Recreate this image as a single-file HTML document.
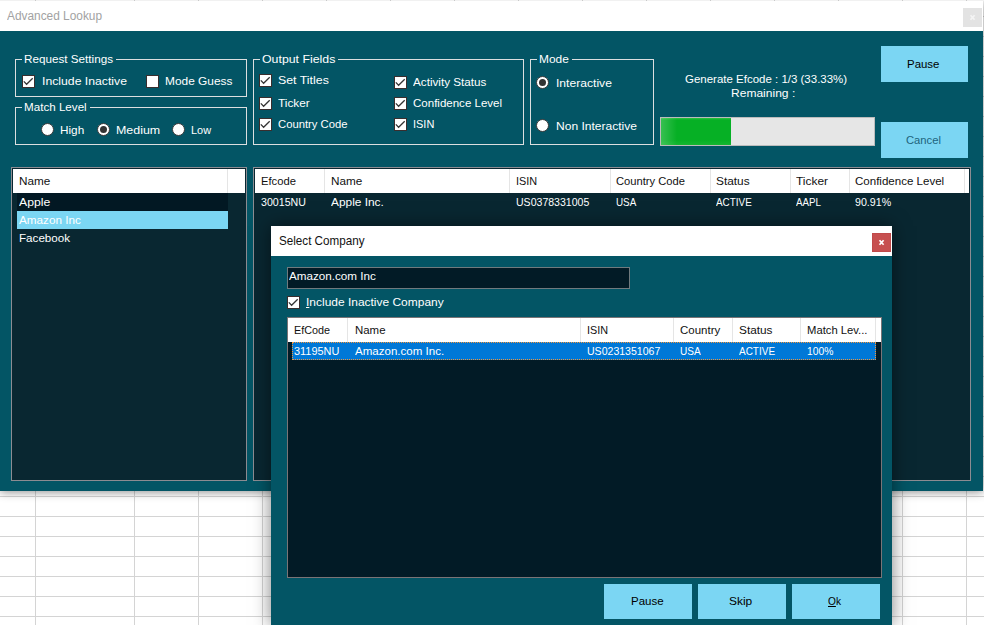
<!DOCTYPE html>
<html><head><meta charset="utf-8"><title>Advanced Lookup</title>
<style>
html,body{margin:0;padding:0;}
body{width:984px;height:625px;position:relative;overflow:hidden;background:#fff;font-family:"Liberation Sans",sans-serif;font-size:11.5px;}
div{position:absolute;box-sizing:content-box;}
.t{position:absolute;white-space:nowrap;line-height:14px;transform-origin:0 50%;}
</style></head><body>
<div style="left:0px;top:16px;width:984px;height:1px;background:#d4d4d4;"></div>
<div style="left:0px;top:36px;width:984px;height:1px;background:#d4d4d4;"></div>
<div style="left:0px;top:56px;width:984px;height:1px;background:#d4d4d4;"></div>
<div style="left:0px;top:76px;width:984px;height:1px;background:#d4d4d4;"></div>
<div style="left:0px;top:96px;width:984px;height:1px;background:#d4d4d4;"></div>
<div style="left:0px;top:116px;width:984px;height:1px;background:#d4d4d4;"></div>
<div style="left:0px;top:136px;width:984px;height:1px;background:#d4d4d4;"></div>
<div style="left:0px;top:156px;width:984px;height:1px;background:#d4d4d4;"></div>
<div style="left:0px;top:176px;width:984px;height:1px;background:#d4d4d4;"></div>
<div style="left:0px;top:196px;width:984px;height:1px;background:#d4d4d4;"></div>
<div style="left:0px;top:216px;width:984px;height:1px;background:#d4d4d4;"></div>
<div style="left:0px;top:236px;width:984px;height:1px;background:#d4d4d4;"></div>
<div style="left:0px;top:256px;width:984px;height:1px;background:#d4d4d4;"></div>
<div style="left:0px;top:276px;width:984px;height:1px;background:#d4d4d4;"></div>
<div style="left:0px;top:296px;width:984px;height:1px;background:#d4d4d4;"></div>
<div style="left:0px;top:316px;width:984px;height:1px;background:#d4d4d4;"></div>
<div style="left:0px;top:336px;width:984px;height:1px;background:#d4d4d4;"></div>
<div style="left:0px;top:356px;width:984px;height:1px;background:#d4d4d4;"></div>
<div style="left:0px;top:376px;width:984px;height:1px;background:#d4d4d4;"></div>
<div style="left:0px;top:396px;width:984px;height:1px;background:#d4d4d4;"></div>
<div style="left:0px;top:416px;width:984px;height:1px;background:#d4d4d4;"></div>
<div style="left:0px;top:436px;width:984px;height:1px;background:#d4d4d4;"></div>
<div style="left:0px;top:456px;width:984px;height:1px;background:#d4d4d4;"></div>
<div style="left:0px;top:476px;width:984px;height:1px;background:#d4d4d4;"></div>
<div style="left:0px;top:496px;width:984px;height:1px;background:#d4d4d4;"></div>
<div style="left:0px;top:516px;width:984px;height:1px;background:#d4d4d4;"></div>
<div style="left:0px;top:536px;width:984px;height:1px;background:#d4d4d4;"></div>
<div style="left:0px;top:556px;width:984px;height:1px;background:#d4d4d4;"></div>
<div style="left:0px;top:576px;width:984px;height:1px;background:#d4d4d4;"></div>
<div style="left:0px;top:596px;width:984px;height:1px;background:#d4d4d4;"></div>
<div style="left:0px;top:616px;width:984px;height:1px;background:#d4d4d4;"></div>
<div style="left:35px;top:0px;width:1px;height:625px;background:#d4d4d4;"></div>
<div style="left:134px;top:0px;width:1px;height:625px;background:#d4d4d4;"></div>
<div style="left:198px;top:0px;width:1px;height:625px;background:#d4d4d4;"></div>
<div style="left:262px;top:0px;width:1px;height:625px;background:#d4d4d4;"></div>
<div style="left:902px;top:0px;width:1px;height:625px;background:#d4d4d4;"></div>
<div style="left:966px;top:0px;width:1px;height:625px;background:#d4d4d4;"></div>
<div style="left:0px;top:1px;width:983px;height:490px;background:#035565;box-shadow:0 1px 9px rgba(0,0,0,.45);"></div>
<div style="left:0px;top:1px;width:983px;height:30px;background:#fff;"></div>
<div style="left:0px;top:0px;width:984px;height:1px;background:#f1f1f1;"></div>
<div style="left:35px;top:0px;width:1px;height:1px;background:#c9c9c9;"></div>
<div style="left:134px;top:0px;width:1px;height:1px;background:#c9c9c9;"></div>
<div style="left:198px;top:0px;width:1px;height:1px;background:#c9c9c9;"></div>
<div style="left:262px;top:0px;width:1px;height:1px;background:#c9c9c9;"></div>
<div style="left:326px;top:0px;width:1px;height:1px;background:#c9c9c9;"></div>
<div style="left:390px;top:0px;width:1px;height:1px;background:#c9c9c9;"></div>
<div style="left:454px;top:0px;width:1px;height:1px;background:#c9c9c9;"></div>
<div style="left:518px;top:0px;width:1px;height:1px;background:#c9c9c9;"></div>
<div style="left:582px;top:0px;width:1px;height:1px;background:#c9c9c9;"></div>
<div style="left:646px;top:0px;width:1px;height:1px;background:#c9c9c9;"></div>
<div style="left:710px;top:0px;width:1px;height:1px;background:#c9c9c9;"></div>
<div style="left:774px;top:0px;width:1px;height:1px;background:#c9c9c9;"></div>
<div style="left:838px;top:0px;width:1px;height:1px;background:#c9c9c9;"></div>
<div style="left:902px;top:0px;width:1px;height:1px;background:#c9c9c9;"></div>
<div style="left:966px;top:0px;width:1px;height:1px;background:#c9c9c9;"></div>
<span class="t" style="left:7.0px;top:9px;color:#a2a2a2;transform:scaleX(0.9495);font-size:12.5px;">Advanced Lookup</span>
<div style="left:963px;top:8px;width:19px;height:19px;background:#e3e3e3;"></div>
<svg style="position:absolute;left:963px;top:8px" width="19" height="19"><path d="M7.5 7.2 L11.6 11.8 M11.6 7.2 L7.5 11.8" stroke="#f4f4f4" stroke-width="1.7" fill="none"/></svg>
<div style="left:15px;top:59px;width:230px;height:36px;border:1px solid #dcdfe0;"></div>
<div style="left:22px;top:59px;width:94px;height:1px;background:#035565;"></div>
<span class="t" style="left:24.2px;top:52px;color:#fff;transform:scaleX(1.0161);">Request Settings</span>
<div style="left:22px;top:75px;width:11px;height:11px;background:#fff;border:1px solid #3a2e2e;"><svg width="13" height="13" viewBox="0 0 13 13" style="position:absolute;left:-1px;top:-1px"><path d="M1.8 6.4 L4.6 9.3 L10.7 3.2" fill="none" stroke="#353535" stroke-width="1.25"/></svg></div>
<span class="t" style="left:41.5px;top:74px;color:#fff;transform:scaleX(1.0635);">Include Inactive</span>
<div style="left:146px;top:75px;width:11px;height:11px;background:#fff;border:1px solid #3a2e2e;"></div>
<span class="t" style="left:165.1px;top:74px;color:#fff;transform:scaleX(1.0343);">Mode Guess</span>
<div style="left:15px;top:107px;width:230px;height:36px;border:1px solid #dcdfe0;"></div>
<div style="left:22px;top:107px;width:68px;height:1px;background:#035565;"></div>
<span class="t" style="left:24.2px;top:100px;color:#fff;transform:scaleX(1.0112);">Match Level</span>
<div style="left:41px;top:123px;width:11px;height:11px;background:#fff;border:1px solid #3a3a3a;border-radius:50%;"></div>
<span class="t" style="left:60.2px;top:123px;color:#fff;transform:scaleX(1.0224);">High</span>
<div style="left:97px;top:123px;width:11px;height:11px;background:#fff;border:1px solid #3a3a3a;border-radius:50%;"><div style="left:2px;top:2px;width:7px;height:7px;border-radius:50%;background:#333"></div></div>
<span class="t" style="left:115.9px;top:123px;color:#fff;transform:scaleX(1.0801);">Medium</span>
<div style="left:172px;top:123px;width:11px;height:11px;background:#fff;border:1px solid #3a3a3a;border-radius:50%;"></div>
<span class="t" style="left:191.0px;top:123px;color:#fff;transform:scaleX(0.9534);">Low</span>
<div style="left:253px;top:59px;width:269px;height:84px;border:1px solid #dcdfe0;"></div>
<div style="left:260px;top:59px;width:78px;height:1px;background:#035565;"></div>
<span class="t" style="left:261.7px;top:52px;color:#fff;transform:scaleX(1.0727);">Output Fields</span>
<div style="left:259px;top:74px;width:11px;height:11px;background:#fff;border:1px solid #3a2e2e;"><svg width="13" height="13" viewBox="0 0 13 13" style="position:absolute;left:-1px;top:-1px"><path d="M1.8 6.4 L4.6 9.3 L10.7 3.2" fill="none" stroke="#353535" stroke-width="1.25"/></svg></div>
<span class="t" style="left:277.8px;top:73px;color:#fff;transform:scaleX(1.0752);">Set Titles</span>
<div style="left:259px;top:97px;width:11px;height:11px;background:#fff;border:1px solid #3a2e2e;"><svg width="13" height="13" viewBox="0 0 13 13" style="position:absolute;left:-1px;top:-1px"><path d="M1.8 6.4 L4.6 9.3 L10.7 3.2" fill="none" stroke="#353535" stroke-width="1.25"/></svg></div>
<span class="t" style="left:278.0px;top:96px;color:#fff;transform:scaleX(1.0273);">Ticker</span>
<div style="left:259px;top:118px;width:11px;height:11px;background:#fff;border:1px solid #3a2e2e;"><svg width="13" height="13" viewBox="0 0 13 13" style="position:absolute;left:-1px;top:-1px"><path d="M1.8 6.4 L4.6 9.3 L10.7 3.2" fill="none" stroke="#353535" stroke-width="1.25"/></svg></div>
<span class="t" style="left:277.8px;top:117px;color:#fff;transform:scaleX(0.9800);">Country Code</span>
<div style="left:394px;top:76px;width:11px;height:11px;background:#fff;border:1px solid #3a2e2e;"><svg width="13" height="13" viewBox="0 0 13 13" style="position:absolute;left:-1px;top:-1px"><path d="M1.8 6.4 L4.6 9.3 L10.7 3.2" fill="none" stroke="#353535" stroke-width="1.25"/></svg></div>
<span class="t" style="left:413.0px;top:75px;color:#fff;transform:scaleX(1.0172);">Activity Status</span>
<div style="left:394px;top:97px;width:11px;height:11px;background:#fff;border:1px solid #3a2e2e;"><svg width="13" height="13" viewBox="0 0 13 13" style="position:absolute;left:-1px;top:-1px"><path d="M1.8 6.4 L4.6 9.3 L10.7 3.2" fill="none" stroke="#353535" stroke-width="1.25"/></svg></div>
<span class="t" style="left:413.0px;top:96px;color:#fff;transform:scaleX(1.0018);">Confidence Level</span>
<div style="left:394px;top:118px;width:11px;height:11px;background:#fff;border:1px solid #3a2e2e;"><svg width="13" height="13" viewBox="0 0 13 13" style="position:absolute;left:-1px;top:-1px"><path d="M1.8 6.4 L4.6 9.3 L10.7 3.2" fill="none" stroke="#353535" stroke-width="1.25"/></svg></div>
<span class="t" style="left:413.2px;top:117px;color:#fff;transform:scaleX(0.9539);">ISIN</span>
<div style="left:530px;top:59px;width:122px;height:84px;border:1px solid #dcdfe0;"></div>
<div style="left:537px;top:59px;width:35px;height:1px;background:#035565;"></div>
<span class="t" style="left:539.3px;top:52px;color:#fff;transform:scaleX(1.0365);">Mode</span>
<div style="left:536px;top:76px;width:11px;height:11px;background:#fff;border:1px solid #3a3a3a;border-radius:50%;"><div style="left:2px;top:2px;width:7px;height:7px;border-radius:50%;background:#333"></div></div>
<span class="t" style="left:555.5px;top:76px;color:#fff;transform:scaleX(1.0529);">Interactive</span>
<div style="left:536px;top:119px;width:11px;height:11px;background:#fff;border:1px solid #3a3a3a;border-radius:50%;"></div>
<span class="t" style="left:555.5px;top:119px;color:#fff;transform:scaleX(1.0474);">Non Interactive</span>
<span class="t" style="left:685.2px;top:72px;color:#fff;transform:scaleX(0.9985);">Generate Efcode : 1/3 (33.33%)</span>
<span class="t" style="left:731.3px;top:86px;color:#fff;transform:scaleX(1.0467);">Remaining :</span>
<div style="left:660px;top:117px;width:213px;height:27px;background:#e6e6e6;border:1px solid #bcbcbc;"></div>
<div style="left:661px;top:118px;width:70px;height:27px;background:#06b025;background:linear-gradient(90deg,rgba(255,255,255,.2),rgba(255,255,255,0) 16px),linear-gradient(#2cc244 0,#06b025 2px,#06b025 22px,#15b632 27px);"></div>
<div style="left:881px;top:46px;width:87px;height:36px;background:#7bd6f3;"></div>
<span class="t" style="left:906.9px;top:57px;color:#000;transform:scaleX(0.9944);">Pause</span>
<div style="left:881px;top:122px;width:87px;height:36px;background:#7bd6f3;"></div>
<span class="t" style="left:905.7px;top:133px;color:#20647c;transform:scaleX(0.9765);">Cancel</span>
<div style="left:11px;top:167px;width:234px;height:312px;background:#092731;border:1px solid #8c8c92;"></div>
<div style="left:13px;top:169px;width:232px;height:24px;background:#fff;"></div>
<div style="left:227px;top:169px;width:1px;height:24px;background:#e5e5e5;"></div>
<span class="t" style="left:19.1px;top:174px;color:#111;transform:scaleX(1.0207);">Name</span>
<div style="left:17px;top:193px;width:211px;height:18px;background:#021823;"></div>
<span class="t" style="left:19.1px;top:195px;color:#fff;transform:scaleX(1.0639);">Apple</span>
<div style="left:17px;top:211px;width:211px;height:18px;background:#7bd6f3;"></div>
<span class="t" style="left:19.1px;top:213px;color:#fff;transform:scaleX(1.0188);">Amazon Inc</span>
<span class="t" style="left:19.1px;top:231px;color:#fff;transform:scaleX(1.0119);">Facebook</span>
<div style="left:253px;top:167px;width:716px;height:312px;background:#092731;border:1px solid #8c8c92;"></div>
<div style="left:255px;top:169px;width:714px;height:24px;background:#fff;"></div>
<div style="left:324px;top:169px;width:1px;height:24px;background:#e5e5e5;"></div>
<div style="left:509px;top:169px;width:1px;height:24px;background:#e5e5e5;"></div>
<div style="left:610px;top:169px;width:1px;height:24px;background:#e5e5e5;"></div>
<div style="left:710px;top:169px;width:1px;height:24px;background:#e5e5e5;"></div>
<div style="left:790px;top:169px;width:1px;height:24px;background:#e5e5e5;"></div>
<div style="left:849px;top:169px;width:1px;height:24px;background:#e5e5e5;"></div>
<div style="left:964px;top:169px;width:1px;height:24px;background:#e5e5e5;"></div>
<span class="t" style="left:261.1px;top:174px;color:#111;transform:scaleX(0.9765);">Efcode</span>
<span class="t" style="left:331.1px;top:174px;color:#111;transform:scaleX(1.0207);">Name</span>
<span class="t" style="left:516.1px;top:174px;color:#111;transform:scaleX(0.9450);">ISIN</span>
<span class="t" style="left:616.1px;top:174px;color:#111;transform:scaleX(0.9730);">Country Code</span>
<span class="t" style="left:715.7px;top:174px;color:#111;transform:scaleX(1.0312);">Status</span>
<span class="t" style="left:795.7px;top:174px;color:#111;transform:scaleX(1.0370);">Ticker</span>
<span class="t" style="left:855.3px;top:174px;color:#111;transform:scaleX(1.0030);">Confidence Level</span>
<span class="t" style="left:261.1px;top:195px;color:#fff;transform:scaleX(0.9241);">30015NU</span>
<span class="t" style="left:331.1px;top:195px;color:#fff;transform:scaleX(1.0337);">Apple Inc.</span>
<span class="t" style="left:516.1px;top:195px;color:#fff;transform:scaleX(0.9171);">US0378331005</span>
<span class="t" style="left:616.1px;top:195px;color:#fff;transform:scaleX(0.8576);">USA</span>
<span class="t" style="left:715.7px;top:195px;color:#fff;transform:scaleX(0.8603);">ACTIVE</span>
<span class="t" style="left:795.7px;top:195px;color:#fff;transform:scaleX(0.8497);">AAPL</span>
<span class="t" style="left:855.3px;top:195px;color:#fff;transform:scaleX(0.9255);">90.91%</span>
<div style="left:271px;top:226px;width:621px;height:399px;background:#035565;box-shadow:0 0 17px rgba(0,0,0,.5);"></div>
<div style="left:271px;top:226px;width:621px;height:30px;background:#fff;"></div>
<span class="t" style="left:278.9px;top:234px;color:#111;transform:scaleX(0.9557);font-size:12.2px;">Select Company</span>
<div style="left:872px;top:233px;width:17px;height:17px;background:#c75050;border:1px solid #c04a4a;"></div>
<svg style="position:absolute;left:872px;top:233px" width="19" height="19"><path d="M7.5 7.2 L11.6 11.8 M11.6 7.2 L7.5 11.8" stroke="#fff" stroke-width="1.7" fill="none"/></svg>
<div style="left:287px;top:267px;width:341px;height:20px;background:#021b26;border:1px solid #707a7e;"></div>
<span class="t" style="left:289.0px;top:269px;color:#fff;transform:scaleX(1.0143);">Amazon.com Inc</span>
<div style="left:287px;top:296px;width:11px;height:11px;background:#fff;border:1px solid #3a2e2e;"><svg width="13" height="13" viewBox="0 0 13 13" style="position:absolute;left:-1px;top:-1px"><path d="M1.8 6.4 L4.6 9.3 L10.7 3.2" fill="none" stroke="#353535" stroke-width="1.25"/></svg></div>
<span class="t" style="left:306.4px;top:295px;color:#fff;transform:scaleX(1.0405);"><u>I</u>nclude Inactive Company</span>
<div style="left:287px;top:317px;width:593px;height:259px;background:#021b26;border:1px solid #7a7476;"></div>
<div style="left:288px;top:318px;width:593px;height:24px;background:#fff;"></div>
<div style="left:347px;top:318px;width:1px;height:24px;background:#e5e5e5;"></div>
<div style="left:580px;top:318px;width:1px;height:24px;background:#e5e5e5;"></div>
<div style="left:673px;top:318px;width:1px;height:24px;background:#e5e5e5;"></div>
<div style="left:732px;top:318px;width:1px;height:24px;background:#e5e5e5;"></div>
<div style="left:800px;top:318px;width:1px;height:24px;background:#e5e5e5;"></div>
<div style="left:875px;top:318px;width:1px;height:24px;background:#e5e5e5;"></div>
<div style="left:292px;top:342px;width:582px;height:16px;background:#0078d7;border:1px dotted #f0963c;"></div>
<span class="t" style="left:294.3px;top:323px;color:#111;transform:scaleX(0.9391);">EfCode</span>
<span class="t" style="left:354.5px;top:323px;color:#111;transform:scaleX(0.9946);">Name</span>
<span class="t" style="left:587.4px;top:323px;color:#111;transform:scaleX(0.9405);">ISIN</span>
<span class="t" style="left:679.9px;top:323px;color:#111;transform:scaleX(0.9988);">Country</span>
<span class="t" style="left:738.6px;top:323px;color:#111;transform:scaleX(1.0281);">Status</span>
<span class="t" style="left:806.9px;top:323px;color:#111;transform:scaleX(0.9788);">Match Lev...</span>
<span class="t" style="left:294.3px;top:344px;color:#fff;transform:scaleX(0.9492);">31195NU</span>
<span class="t" style="left:354.5px;top:344px;color:#fff;transform:scaleX(1.0041);">Amazon.com Inc.</span>
<span class="t" style="left:587.4px;top:344px;color:#fff;transform:scaleX(0.9171);">US0231351067</span>
<span class="t" style="left:679.9px;top:344px;color:#fff;transform:scaleX(0.8745);">USA</span>
<span class="t" style="left:738.6px;top:344px;color:#fff;transform:scaleX(0.8676);">ACTIVE</span>
<span class="t" style="left:806.9px;top:344px;color:#fff;transform:scaleX(0.8973);">100%</span>
<div style="left:604px;top:584px;width:88px;height:35px;background:#7bd6f3;"></div>
<span class="t" style="left:630.6px;top:594px;color:#000;transform:scaleX(1.0005);">Pause</span>
<div style="left:698px;top:584px;width:88px;height:35px;background:#7bd6f3;"></div>
<span class="t" style="left:729.4px;top:594px;color:#000;transform:scaleX(1.0390);">Skip</span>
<div style="left:792px;top:584px;width:88px;height:35px;background:#7bd6f3;"></div>
<span class="t" style="left:827.9px;top:594px;color:#000;transform:scaleX(0.8809);"><u>O</u>k</span>
</body></html>
